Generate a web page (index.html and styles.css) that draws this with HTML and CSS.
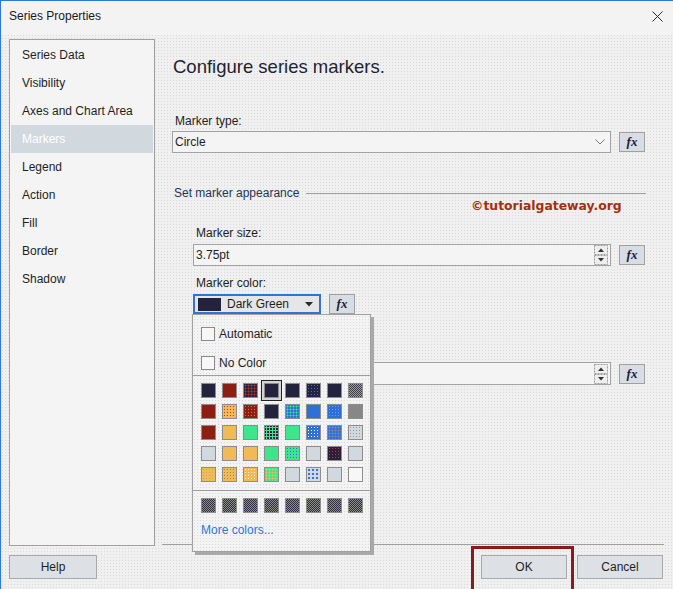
FILE: index.html
```html
<!DOCTYPE html>
<html>
<head>
<meta charset="utf-8">
<title>Series Properties</title>
<link rel="stylesheet" href="styles.css">
</head>
<body>
<div class="window">
  <div class="titlebar">
    <span class="title">Series Properties</span>
    <svg class="close" width="11" height="11" viewBox="0 0 11 11"><path d="M0.5 0.5L10.5 10.5M10.5 0.5L0.5 10.5" stroke="#2a2a2a" stroke-width="1" fill="none"/></svg>
  </div>
  <div class="main">
    <nav class="nav">
      <div class="nav-item">Series Data</div>
      <div class="nav-item">Visibility</div>
      <div class="nav-item">Axes and Chart Area</div>
      <div class="nav-item active">Markers</div>
      <div class="nav-item">Legend</div>
      <div class="nav-item">Action</div>
      <div class="nav-item">Fill</div>
      <div class="nav-item">Border</div>
      <div class="nav-item">Shadow</div>
    </nav>
    <section class="content">
      <h1 class="heading">Configure series markers.</h1>
      <div class="label first-label">Marker type:</div>
      <div class="row row-select">
        <div class="select">
          <span>Circle</span>
          <svg class="chev" width="10" height="6" viewBox="0 0 10 6"><path d="M0.5 0.5L5 5L9.5 0.5" fill="none" stroke="#7a7a7a"/></svg>
        </div>
        <button class="fx">fx</button>
      </div>
      <div class="group">
        <span class="group-title">Set marker appearance</span>
        <span class="group-rule"></span>
      </div>
      <div class="watermark">©tutorialgateway.org</div>
      <div class="indent">
        <div class="label size-label">Marker size:</div>
        <div class="row row-input">
          <div class="input">
            <span>3.75pt</span>
            <svg class="spin" width="14" height="20" viewBox="0 0 14 20"><rect x="0.5" y="0.5" width="13" height="9" fill="#eeeeee" stroke="#9a9a9a" stroke-dasharray="2 1"/><rect x="0.5" y="10.5" width="13" height="9" fill="#eeeeee" stroke="#9a9a9a" stroke-dasharray="2 1"/><path d="M4 7L7 3.5L10 7Z" fill="#333"/><path d="M4 13L7 16.5L10 13Z" fill="#333"/></svg>
          </div>
          <button class="fx">fx</button>
        </div>
        <div class="label color-label">Marker color:</div>
        <div class="row row-color">
          <div class="color-select">
            <span class="color-chip"></span>
            <span class="color-name">Dark Green</span>
            <svg class="tri" width="8" height="5" viewBox="0 0 8 5"><path d="M0 0H8L4 4.5Z" fill="#2a2a2a"/></svg>
          </div>
          <button class="fx">fx</button>
          <div class="popup">
            <div class="check-row"><span class="checkbox"></span><span>Automatic</span></div>
            <div class="check-row"><span class="checkbox"></span><span>No Color</span></div>
            <div class="popup-sep"></div>
            <div class="swatches">
              <span class="sw navy"></span><span class="sw red"></span><span class="sw p-rednavy"></span><span class="sw navy selected"></span><span class="sw navy"></span><span class="sw p-bluenavy"></span><span class="sw navy"></span><span class="sw p-graychk"></span>
              <span class="sw red"></span><span class="sw p-goldred"></span><span class="sw p-redlight"></span><span class="sw navy"></span><span class="sw p-bluegreen"></span><span class="sw blue"></span><span class="sw p-bluelight"></span><span class="sw gray"></span>
              <span class="sw red"></span><span class="sw gold"></span><span class="sw green"></span><span class="sw p-navygreen"></span><span class="sw green"></span><span class="sw p-bluewhite"></span><span class="sw p-bluegray"></span><span class="sw p-lightgray"></span>
              <span class="sw light"></span><span class="sw gold"></span><span class="sw gold"></span><span class="sw green"></span><span class="sw p-greenblue"></span><span class="sw light"></span><span class="sw p-navyred"></span><span class="sw light"></span>
              <span class="sw p-goldgray"></span><span class="sw p-goldbrown"></span><span class="sw p-goldwhite"></span><span class="sw p-greengold"></span><span class="sw light"></span><span class="sw p-lightblue"></span><span class="sw light"></span><span class="sw white"></span>
            </div>
            <div class="popup-sep sep2"></div>
            <div class="swatches recent">
              <span class="sw p-darkchk"></span><span class="sw p-darkchk"></span><span class="sw p-darkchk"></span><span class="sw p-darkchk"></span><span class="sw p-darkchk"></span><span class="sw p-darkchk"></span><span class="sw p-darkchk"></span><span class="sw p-darkchk"></span>
            </div>
            <div class="more">More colors...</div>
          </div>
        </div>
        <div class="row row-third">
          <div class="input tall">
            <span></span>
            <svg class="spin" width="14" height="20" viewBox="0 0 14 20"><rect x="0.5" y="0.5" width="13" height="9" fill="#eeeeee" stroke="#9a9a9a" stroke-dasharray="2 1"/><rect x="0.5" y="10.5" width="13" height="9" fill="#eeeeee" stroke="#9a9a9a" stroke-dasharray="2 1"/><path d="M4 7L7 3.5L10 7Z" fill="#333"/><path d="M4 13L7 16.5L10 13Z" fill="#333"/></svg>
          </div>
          <button class="fx">fx</button>
        </div>
      </div>
      <div class="spacer"></div>
      <div class="bottom-rule"></div>
    </section>
  </div>
  <footer class="footer">
    <button class="btn">Help</button>
    <div class="footer-right">
      <button class="btn">OK</button>
      <button class="btn">Cancel</button>
    </div>
    <div class="highlight"></div>
  </footer>
</div>
</body>
</html>
```
FILE: styles.css
```css
html, body {
  margin: 0;
  padding: 0;
  overflow: hidden;
}

.window {
  width: 673px;
  height: 589px;
  box-sizing: border-box;
  border-top: 1px solid #2b78e4;
  border-left: 1px solid #2b78e4;
  display: flex;
  flex-direction: column;
  background-color: #f0f0f0;
  background-image: radial-gradient(circle, #dadada 0.7px, transparent 0.9px);
  background-size: 3px 3px;
  font-family: "Liberation Sans", Arial, sans-serif;
  font-size: 12px;
  color: #1e1e1e;
}

.titlebar {
  height: 34px;
  flex: none;
  box-sizing: border-box;
  background: #f3f3f3;
  display: flex;
  align-items: center;
  justify-content: space-between;
  padding: 0 10px 4px 8px;
}

.title {
  font-size: 12px;
  color: #1a1a1a;
}

.main {
  display: flex;
  height: 511px;
  flex: none;
}

.nav {
  margin: 4px 0 0 8px;
  width: 146px;
  box-sizing: border-box;
  border: 1px solid #a0a0a0;
  background: #f4f4f4;
  padding: 1px;
}

.nav-item {
  height: 28px;
  line-height: 28px;
  padding-left: 11px;
  color: #1e1e1e;
}

.nav-item.active {
  background: #d1d9df;
  color: #ffffff;
}

.content {
  margin-left: 5px;
  width: 504px;
  box-sizing: border-box;
  padding: 0 19px 0 12px;
  display: flex;
  flex-direction: column;
  position: relative;
}

.heading {
  font-size: 18.5px;
  font-weight: normal;
  line-height: 24px;
  margin: 20px 0 0 1px;
  color: #1f2430;
}

.label {
  line-height: 16px;
  padding-left: 3px;
}

.first-label {
  margin-top: 34px;
}

.row {
  display: flex;
  align-items: center;
  gap: 8px;
}

.row-select {
  margin-top: 2px;
}

.select {
  flex: 1;
  height: 22px;
  box-sizing: border-box;
  border: 1px solid #a3a3a3;
  background: #f4f4f4;
  display: flex;
  align-items: center;
  justify-content: space-between;
  padding: 0 5px 0 2px;
}

.fx {
  width: 26px;
  height: 20px;
  box-sizing: border-box;
  border: 1px solid #a0a0a0;
  background: #d8dde3;
  padding: 0;
  font-family: "Liberation Serif", "Times New Roman", serif;
  font-weight: bold;
  font-style: italic;
  font-size: 13px;
  color: #1c2040;
  line-height: 16px;
  flex: none;
}

.group {
  margin-top: 32px;
  display: flex;
  align-items: center;
  height: 16px;
  padding-left: 2px;
  margin-right: -1px;
}

.group-title {
  color: #23345a;
}

.group-rule {
  flex: 1;
  height: 1px;
  background: #a0a0a0;
  margin-left: 7px;
}

.watermark {
  position: absolute;
  left: 311px;
  top: 163px;
  font-family: "DejaVu Sans", Verdana, sans-serif;
  font-weight: bold;
  font-size: 12.4px;
  line-height: 16px;
  color: #a3300e;
}

.indent {
  padding-left: 21px;
}

.size-label {
  margin-top: 24px;
}

.row-input {
  margin-top: 3px;
}

.input {
  flex: 1;
  height: 22px;
  box-sizing: border-box;
  border: 1px solid #a3a3a3;
  background: #f4f4f4;
  display: flex;
  align-items: center;
  justify-content: space-between;
  padding: 0 2px 0 2px;
}

.input.tall {
  height: 23px;
}

.color-label {
  margin-top: 9px;
}

.row-color {
  margin-top: 3px;
  position: relative;
}

.color-select {
  width: 128px;
  height: 20px;
  box-sizing: border-box;
  border: 2px solid #3273d8;
  background: #e6e6e6;
  display: flex;
  align-items: center;
  padding: 0 6px 0 3px;
}

.color-chip {
  width: 23px;
  height: 13px;
  background: #23233d;
  flex: none;
}

.color-name {
  margin-left: 6px;
  flex: 1;
}

.popup {
  position: absolute;
  left: -1px;
  top: 20px;
  width: 179px;
  height: 238px;
  box-sizing: border-box;
  border: 1px solid #a0a0a0;
  background-color: #f3f3f3;
  background-image: radial-gradient(circle, #dadada 0.7px, transparent 0.9px);
  background-size: 3px 3px;
  box-shadow: 3px 3px 0 #a9a9a9;
  z-index: 5;
  padding-top: 12px;
}

.check-row {
  display: flex;
  align-items: center;
  height: 14px;
  padding-left: 8px;
  gap: 4px;
  margin-bottom: 15px;
}

.check-row + .check-row {
  margin-bottom: 0;
}

.checkbox {
  width: 14px;
  height: 14px;
  box-sizing: border-box;
  border: 1px solid #8a8a8a;
  background: #f7f7f7;
}

.popup-sep {
  height: 1px;
  background: #9d9d9d;
  margin-top: 5px;
}

.swatches {
  display: grid;
  grid-template-columns: repeat(8, 15px);
  grid-auto-rows: 15px;
  column-gap: 6px;
  row-gap: 6px;
  padding: 7px 0 0 8px;
}

.popup-sep.sep2 {
  margin-top: 8px;
}

.recent {
  padding-top: 7px;
}

.more {
  color: #2f76d6;
  padding-left: 8px;
  margin-top: 9px;
  line-height: 16px;
}

.sw {
  display: block;
  width: 15px;
  height: 15px;
  box-sizing: border-box;
  border: 1px solid #8d8d8d;
}

.sw.selected {
  box-shadow: 0 0 0 2px #d4d4d4, 0 0 0 3px #222;
}

.navy { background: #23233d; }
.red { background: #8c1f12; }
.gold { background: #f0bb57; }
.green { background: #3de68b; }
.blue { background: #2f70d8; }
.gray { background: #878787; }
.light { background: #d1d9df; }
.white { background: #f7f7f7; }

.p-rednavy { background: radial-gradient(circle, #b8321f 0.9px, transparent 1.1px) 0 0 / 3px 3px, #23233d; }
.p-bluenavy { background: radial-gradient(circle, #2f70d8 0.8px, transparent 1px) 0 0 / 3px 3px, #23233d; }
.p-graychk { background: repeating-conic-gradient(#3a3a4a 0 25%, #a0a0a0 0 50%) 0 0 / 2px 2px; }
.p-goldred { background: radial-gradient(circle, #b04020 0.8px, transparent 1px) 0 0 / 3px 3px, #f0bb57; }
.p-redlight { background: radial-gradient(circle, #d86a5a 0.8px, transparent 1px) 0 0 / 3px 3px, #8c1f12; }
.p-bluegreen { background: radial-gradient(circle, #3de68b 0.9px, transparent 1.1px) 0 0 / 3px 3px, #2f70d8; }
.p-bluelight { background: radial-gradient(circle, #6a9ef0 0.8px, transparent 1px) 0 0 / 3px 3px, #2f70d8; }
.p-navygreen { background: radial-gradient(circle, #3de68b 1px, transparent 1.2px) 0 0 / 3px 3px, #23233d; }
.p-bluewhite { background: radial-gradient(circle, #ffffff 0.8px, transparent 1px) 0 0 / 3px 3px, #2f70d8; }
.p-bluegray { background: radial-gradient(circle, #7d8aa8 0.9px, transparent 1.1px) 0 0 / 3px 3px, #2f70d8; }
.p-lightgray { background: radial-gradient(circle, #9a9a9a 0.8px, transparent 1px) 0 0 / 3px 3px, #d1d9df; }
.p-greenblue { background: radial-gradient(circle, #2f70d8 0.8px, transparent 1px) 0 0 / 3px 3px, #3de68b; }
.p-navyred { background: radial-gradient(circle, #c0392b 0.8px, transparent 1px) 0 0 / 3px 3px, #23233d; }
.p-goldgray { background: radial-gradient(circle, #b7a98a 0.8px, transparent 1px) 0 0 / 3px 3px, #f0bb57; }
.p-goldbrown { background: radial-gradient(circle, #b07a40 0.8px, transparent 1px) 0 0 / 3px 3px, #f0bb57; }
.p-goldwhite { background: radial-gradient(circle, #fbf3e0 0.8px, transparent 1px) 0 0 / 3px 3px, #f0bb57; }
.p-greengold { background: radial-gradient(circle, #f0bb57 0.9px, transparent 1.1px) 0 0 / 3px 3px, #3de68b; }
.p-lightblue { background: radial-gradient(circle, #2f70d8 0.7px, transparent 0.9px) 0 0 / 4px 4px, #d1d9df; }
.p-darkchk { background: repeating-conic-gradient(#2c2c40 0 25%, #8e8e8e 0 50%) 0 0 / 2px 2px; }

.row-third {
  margin-top: 48px;
}

.spacer {
  flex: 1;
}

.bottom-rule {
  height: 1px;
  background: #a0a0a0;
  margin: 0 -19px 1px -10px;
}

.footer {
  flex: 1;
  display: flex;
  align-items: flex-start;
  justify-content: space-between;
  padding: 9px 10px 0 8px;
  position: relative;
}

.footer-right {
  display: flex;
  gap: 10px;
}

.btn {
  height: 24px;
  width: 86px;
  box-sizing: border-box;
  border: 1px solid #a8a8a8;
  background: #dde1e6;
  font-family: "Liberation Sans", Arial, sans-serif;
  font-size: 12px;
  color: #1e1e1e;
  padding: 0;
}

.footer > .btn {
  width: 88px;
}

.highlight {
  position: absolute;
  left: 470px;
  top: 0;
  width: 103px;
  height: 48px;
  box-sizing: border-box;
  border: 3px solid #8b1a1a;
}
```
